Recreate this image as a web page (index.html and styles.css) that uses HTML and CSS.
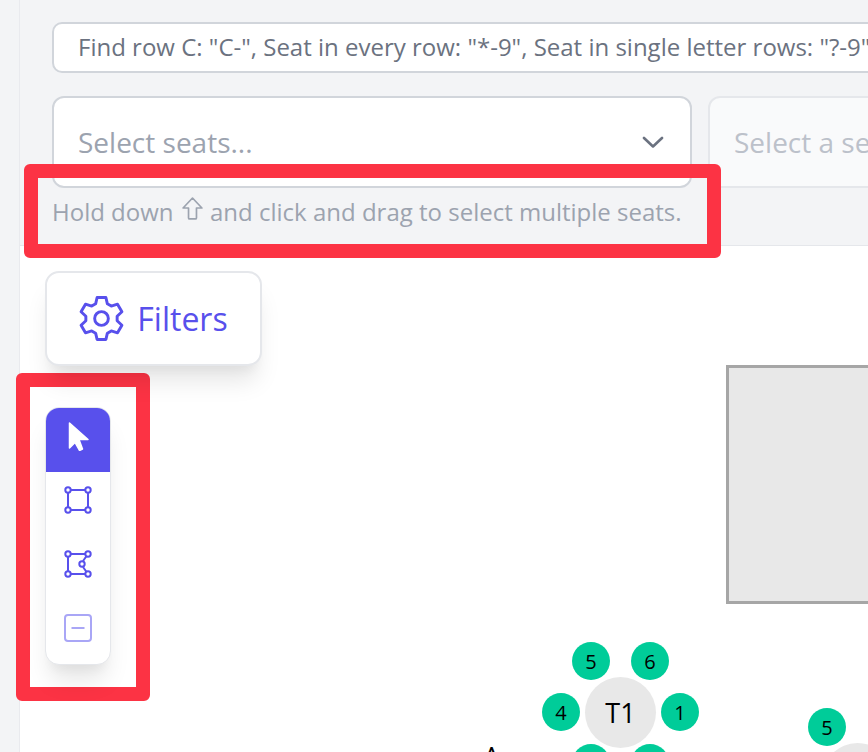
FILE: index.html
```html
<!DOCTYPE html>
<html lang="en">
<head>
  <meta charset="UTF-8">
  <meta name="viewport" content="width=device-width, initial-scale=1.0">
  <title>Seat selection</title>
  <link rel="stylesheet" href="styles.css">
</head>
<body>
  <div class="app">
    <div class="sidebar"></div>
    <div class="main">
      <div class="panel">
        <div class="search">Find row C: "C-", Seat in every row: "*-9", Seat in single letter rows: "?-9"</div>
        <div class="select-row">
          <div class="select">
            <span>Select seats...</span>
            <svg class="chevron" viewBox="0 0 22 12" fill="none" stroke="#6b7280" stroke-width="2.6" stroke-linecap="round" stroke-linejoin="round"><path d="M2 2l9 8.500 9-8.500"/></svg>
          </div>
          <div class="select disabled"><span>Select a seat type...</span></div>
        </div>
        <p class="hint">
          Hold down
          <svg class="shift" viewBox="1 1 20 22" fill="none" stroke="#9ca3af" stroke-width="1.600" stroke-linejoin="round"><path d="M11 2L2 11.500h5.200V21a1 1 0 001 1h5.600a1 1 0 001-1v-9.500H20z"/></svg>
          and click and drag to select multiple seats.
        </p>
      </div>

      <div class="canvas">
        <button class="filters">
          <svg class="gear" viewBox="0 0 46 48" fill="none" stroke="#5850ec" stroke-width="3" stroke-linejoin="round"><path d="M17 9L18.500 2.500H27.500L29 9 32.990 11.300 39.370 9.350 43.870 17.150 38.990 21.700V26.300L43.870 30.850 39.370 38.650 32.990 36.700 29 39 27.500 45.500H18.500L17 39 13.010 36.700 6.630 38.650 2.130 30.850 7.010 26.300V21.700L2.130 17.150 6.630 9.350 13.010 11.300z"/><circle cx="23" cy="24" r="7"/></svg>
          <span>Filters</span>
        </button>

        <div class="tools">
          <div class="tool active">
            <svg viewBox="0 0 24 30" width="24" height="30"><path d="M3.500 2v25l5.500-5.500 4.500 8 3-1.500-3.500-9.500h9z" fill="#fff" stroke="#fff" stroke-width="1.500" stroke-linejoin="round"/></svg>
          </div>
          <div class="tool">
            <svg viewBox="0 0 28 28" width="28" height="28" fill="#fff" stroke="#5850ec" stroke-width="2"><path d="M4 4h20v20H4z"/><circle cx="4" cy="4" r="2.700"/><circle cx="24" cy="4" r="2.700"/><circle cx="4" cy="24" r="2.700"/><circle cx="24" cy="24" r="2.700"/></svg>
          </div>
          <div class="tool">
            <svg viewBox="0 0 28 28" width="28" height="28" fill="#fff" stroke="#5850ec" stroke-width="2"><path d="M24 4H4v20h20M24 4l-5 7M19 17l5 7" fill="none"/><circle cx="4" cy="4" r="2.700"/><circle cx="24" cy="4" r="2.700"/><circle cx="4" cy="24" r="2.700"/><circle cx="24" cy="24" r="2.700"/><circle cx="18" cy="14" r="2.700"/></svg>
          </div>
          <div class="tool">
            <svg viewBox="0 0 28 28" width="28" height="28" fill="none" stroke="#a9a6f6" stroke-width="2"><rect x="1" y="1" width="26" height="26" rx="3"/><path d="M7.500 14h13"/></svg>
          </div>
        </div>

        <div class="stage"></div>
        <div class="seat s1">5</div>
        <div class="seat s2">6</div>
        <div class="seat s3">4</div>
        <div class="seat s4">1</div>
        <div class="seat s5"></div>
        <div class="seat s6"></div>
        <div class="table t1">T1</div>
        <div class="seat s7">5</div>
        <div class="seat s8"></div>
        <div class="table t2"></div>
        <div class="row-label">A</div>
      </div>
    </div>
  </div>

  <div class="mark mark-hint"></div>
  <div class="mark mark-tools"></div>
</body>
</html>
```

FILE: styles.css
```css
* {
  box-sizing: border-box;
}
html, body {
  height: 100%;
}
body {
  margin: 0;
  overflow: hidden;
  background: white;
  font-family: 'Open Sans', 'Noto Sans', sans-serif;
  color: #374151;
}
.app {
  display: flex;
  height: 752px;
}
.sidebar {
  flex: 0 0 20px;
  background: #f3f4f6;
  border-right: 1px solid #e9eaee;
}
.main {
  flex: 1;
  display: flex;
  flex-direction: column;
  min-width: 0;
}
.panel {
  height: 246px;
  padding: 22px 0 0 32px;
  background: #f3f4f6;
  border-bottom: 1px solid #e5e7eb;
  overflow: hidden;
}
.search {
  width: 860px;
  height: 51px;
  padding: 0 0 2px 24px;
  display: flex;
  align-items: center;
  background: white;
  border: 2px solid #d1d5db;
  border-radius: 10px;
  font-size: 24px;
  color: #6b7280;
  white-space: nowrap;
}
.select-row {
  display: flex;
  gap: 16px;
  margin-top: 23px;
}
.select {
  flex: 0 0 640px;
  height: 92px;
  padding: 0 26px 0 24px;
  display: flex;
  align-items: center;
  justify-content: space-between;
  background: white;
  border: 2px solid #d1d5db;
  border-radius: 12px;
  font-size: 28px;
  color: #9ca3af;
  white-space: nowrap;
}
.select.disabled {
  background: #f9fafb;
  border-color: #e5e7eb;
  color: #bcc1ca;
}
.chevron {
  width: 22px;
  height: 12px;
}
.hint {
  margin: 6px 0 0;
  font-size: 24px;
  line-height: 36px;
  color: #9ca3af;
  white-space: nowrap;
}
.shift {
  width: 21px;
  height: 23px;
  vertical-align: 1px;
  margin: 0 1px 0 2px;
}
.canvas {
  flex: 1;
  position: relative;
  padding: 25px 0 0 25px;
  overflow: hidden;
}
.filters {
  position: relative;
  z-index: 1;
  width: 217px;
  height: 95px;
  display: flex;
  align-items: center;
  justify-content: center;
  gap: 13px;
  padding: 0;
  background: white;
  border: 2px solid #e5e7eb;
  border-radius: 14px;
  box-shadow: 0 20px 25px -5px rgba(0, 0, 0, 0.1), 0 10px 10px -5px rgba(0, 0, 0, 0.04);
  font-family: inherit;
  font-size: 32px;
  color: #5850ec;
}
.gear {
  width: 45px;
  height: 47px;
}
.tools {
  position: relative;
  z-index: 1;
  width: 66px;
  margin-top: 41px;
  background: white;
  border: 1px solid #e5e7eb;
  border-radius: 14px;
  box-shadow: 0 20px 25px -5px rgba(0, 0, 0, 0.1), 0 10px 10px -5px rgba(0, 0, 0, 0.04);
  overflow: hidden;
}
.tool {
  height: 64px;
  padding-bottom: 8px;
  display: flex;
  align-items: center;
  justify-content: center;
}
.tool.active {
  background: #5850ec;
}
.stage {
  position: absolute;
  left: 706px;
  top: 119px;
  width: 300px;
  height: 239px;
  background: #e8e8e8;
  border: 3px solid #a6a6a6;
}
.seat, .table {
  position: absolute;
  display: flex;
  align-items: center;
  justify-content: center;
  border-radius: 50%;
  color: black;
}
.seat {
  width: 38px;
  height: 38px;
  background: #00cc99;
  font-size: 20px;
}
.table {
  width: 71px;
  height: 71px;
  background: #e8e8e8;
  font-size: 27px;
}
.s1 { left: 552px; top: 396px; }
.s2 { left: 611px; top: 396px; }
.s3 { left: 522px; top: 447px; }
.s4 { left: 641px; top: 447px; }
.s5 { left: 552px; top: 498px; }
.s6 { left: 611px; top: 498px; }
.t1 { left: 565px; top: 431px; }
.s7 { left: 788px; top: 462px; }
.s8 { left: 848px; top: 462px; }
.t2 { left: 802px; top: 497px; }
.row-label {
  position: absolute;
  left: 463px;
  top: 492px;
  font-size: 27px;
  color: black;
}
.mark {
  position: absolute;
  border: 14px solid #fc3344;
  border-radius: 6px;
}
.mark-hint {
  left: 24px;
  top: 164px;
  width: 697px;
  height: 94px;
}
.mark-tools {
  left: 16px;
  top: 373px;
  width: 134px;
  height: 328px;
}
```
